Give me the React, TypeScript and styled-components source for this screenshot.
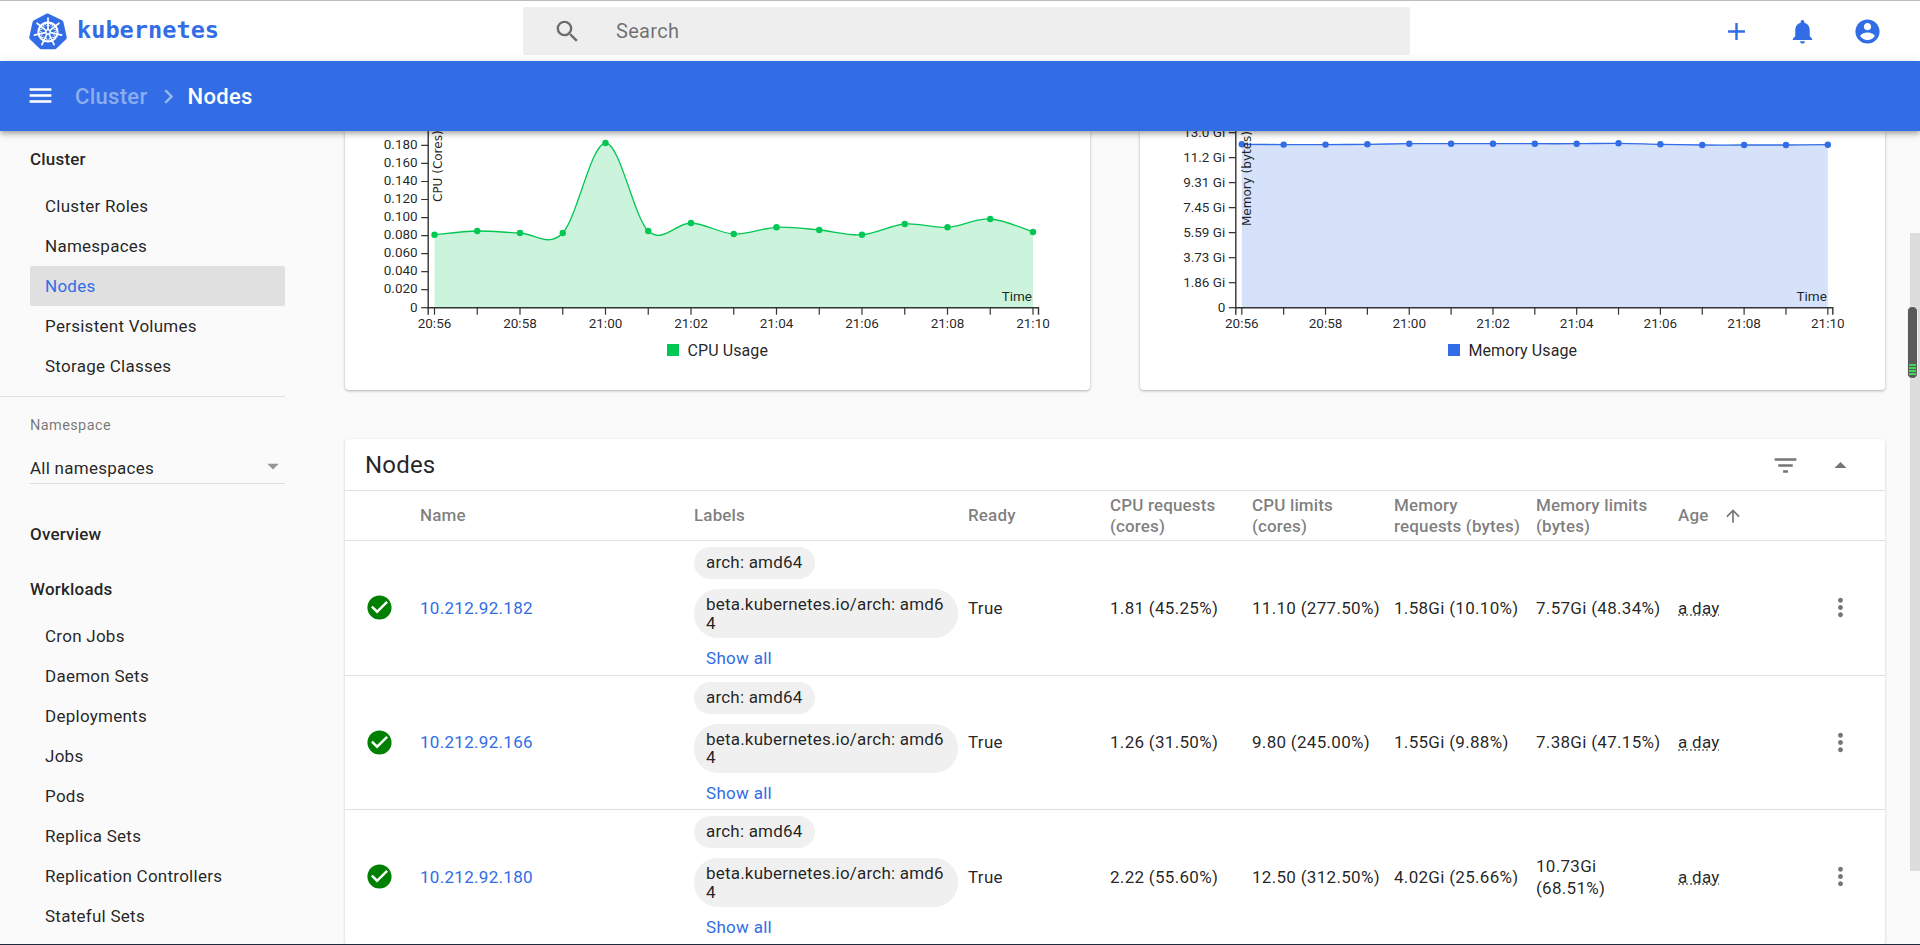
import React from "react";
import styled, { createGlobalStyle } from "styled-components";

const GlobalStyle = createGlobalStyle`
  html, body { margin: 0; padding: 0; height: 100%; overflow: hidden; background: #fafafa; }
  body { font-family: Roboto, "Liberation Sans", sans-serif; color: rgba(0,0,0,.87); }
  #root { height: 100%; }
  * { box-sizing: border-box; }
`;

const BLUE = "#326de6";
const GREEN = "#00c853";

const Page = styled.div`
  width: 1920px; height: 945px; display: flex; flex-direction: column; overflow: hidden;
  border-top: 1px solid #bdbdbd; border-bottom: 1px solid #1f2a3a; background: #fafafa;
`;
const TopBar = styled.header`
  flex: 0 0 60px; display: flex; align-items: center; background: #fff;
`;
const Brand = styled.div`
  width: 523px; padding-left: 29px; display: flex; align-items: center; gap: 10px;
`;
const BrandName = styled.span`
  font-family: "DejaVu Sans Mono", monospace; font-weight: 700; font-size: 23.6px; color: ${BLUE};
  position: relative; top: -1px;
`;
const SearchBox = styled.div`
  width: 887px; height: 48px; background: #eee; border-radius: 2px; display: flex; align-items: center;
  padding-left: 30px; gap: 34px; color: rgba(0,0,0,.54); font-size: 20px; letter-spacing: .3px;
`;
const Actions = styled.div`
  flex: 1; display: flex; justify-content: flex-end; padding-right: 38px; gap: 36.5px; color: ${BLUE};
`;
const Icon = styled.svg<{ $size?: number; $color?: string }>`
  width: ${(p) => p.$size ?? 29}px; height: ${(p) => p.$size ?? 29}px; flex: none; display: block;
  fill: ${(p) => p.$color ?? "currentColor"};
`;
const BlueBar = styled.div`
  flex: 0 0 70px; background: ${BLUE}; color: #fff; display: flex; align-items: center; padding-left: 26px;
  box-shadow: 0 2px 4px -1px rgba(0,0,0,.2), 0 4px 5px 0 rgba(0,0,0,.14), 0 1px 10px 0 rgba(0,0,0,.12);
  position: relative; z-index: 2; font-size: 22px; font-weight: 500;
`;
const Crumb = styled.span<{ $dim?: boolean }>`
  color: ${(p) => (p.$dim ? "rgba(255,255,255,.45)" : "#fff")}; letter-spacing: .3px;
`;
const CrumbSep = styled.span`
  color: rgba(255,255,255,.5); display: flex; margin: 0 5px 0 6px;
`;
const MenuButton = styled.span`
  display: flex; margin-right: 20px; margin-top: -1px;
`;
const Body = styled.div`
  flex: 1; min-height: 0; display: flex; overflow: hidden;
`;
const Sidebar = styled.nav`
  flex: 0 0 300px; padding-top: 8px; overflow: hidden; background: #fafafa;
`;
const SideInner = styled.div`
  width: 285px;
`;
const SideHeading = styled.div<{ $top?: number; $gap?: number }>`
  height: 40px; margin: ${(p) => p.$top ?? 0}px 0 ${(p) => p.$gap ?? 0}px 30px; display: flex; align-items: center;
  font-size: 17px; font-weight: 500; letter-spacing: .2px; color: rgba(0,0,0,.87);
`;
const SideItem = styled.div<{ $active?: boolean }>`
  height: 40px; margin-left: 30px; padding-left: 15px; display: flex; align-items: center; border-radius: 2px;
  font-size: 17px; letter-spacing: .26px; color: ${(p) => (p.$active ? BLUE : "rgba(0,0,0,.87)")};
  background: ${(p) => (p.$active ? "#e0e0e0" : "transparent")};
`;
const SideDivider = styled.div`
  height: 1px; background: #e0e0e0; margin-top: 10px;
`;
const NamespaceLabel = styled.div`
  margin: 20px 0 0 30px; height: 18px; line-height: 18px; font-size: 14.5px; letter-spacing: .4px; color: rgba(0,0,0,.54);
`;
const NamespaceSelect = styled.div`
  margin: 18px 0 0 30px; height: 31px; border-bottom: 1px solid #ddd; display: flex; align-items: center;
  justify-content: space-between; font-size: 17px; letter-spacing: .26px; color: rgba(0,0,0,.87);
`;
const SelectCaret = styled.span`
  display: flex; color: rgba(0,0,0,.4); margin: -4px -2px 0 0;
`;
const Main = styled.main`
  flex: 1; min-width: 0; padding-left: 45px; overflow: hidden;
`;
const ChartRow = styled.div`
  display: flex; gap: 50px; width: 1540px;
`;
const ChartCard = styled.section`
  width: 745px; height: 259px; background: #fff; border-radius: 0 0 4px 4px; overflow: hidden; display: flex; flex-direction: column;
  box-shadow: 0 1px 3px rgba(0,0,0,.3);
`;
const ChartSvg = styled.svg`
  display: block; flex: none; width: 745px; height: 202px; font-family: Roboto, sans-serif; font-size: 13.5px; fill: rgba(0,0,0,.87);
`;
const Legend = styled.div`
  display: flex; align-items: center; justify-content: center; gap: 8.5px; height: 24px; margin-top: 5px;
  font-size: 16px; letter-spacing: .1px; color: rgba(0,0,0,.87);
`;
const LegendSwatch = styled.span<{ $color: string }>`
  width: 12px; height: 12px; background: ${(p) => p.$color}; flex: none;
`;
const TableCard = styled.section`
  margin-top: 49px; width: 1540px; background: #fff; border-radius: 4px;
  box-shadow: 0 1px 3px rgba(0,0,0,.2);
`;
const TableTitleBar = styled.div`
  height: 52px; border-bottom: 1px solid #e0e0e0; display: flex; align-items: center; padding: 1px 0 0 20px;
  font-size: 24px; letter-spacing: .2px; color: rgba(0,0,0,.87);
`;
const TitleText = styled.span`
  flex: 1;
`;
const TitleIcons = styled.span`
  display: flex; gap: 26px; padding-right: 30.5px; color: rgba(0,0,0,.54);
`;
const COLUMNS = "75px 274px 274px 142px 142px 142px 142px 142px 1fr 90px";
const HeadRow = styled.div`
  height: 50px; display: grid; grid-template-columns: ${COLUMNS}; align-items: center; border-bottom: 1px solid #e0e0e0;
  font-size: 17px; font-weight: 500; line-height: 21px; color: rgba(0,0,0,.52); letter-spacing: .15px;
`;
const DataRow = styled.div`
  height: 134.5px; display: grid; grid-template-columns: ${COLUMNS}; align-items: center; border-bottom: 1px solid #e0e0e0;
  font-size: 17px; line-height: 22px; color: rgba(0,0,0,.87); letter-spacing: .3px;
`;
const HeadCell = styled.div`
  white-space: nowrap;
`;
const SortCell = styled.div`
  display: flex; align-items: center; gap: 15px;
`;
const StatusCell = styled.div`
  display: flex; justify-content: center; padding-right: 7px; color: #008000;
`;
const NameLink = styled.a`
  color: ${BLUE};
`;
const Labels = styled.div`
  display: flex; flex-direction: column; align-items: flex-start; gap: 10px;
`;
const Chip = styled.span`
  display: inline-block; width: fit-content; max-width: 264px; padding: 6px 12px; border-radius: 24px; background: #f0f0f0; color: rgba(0,0,0,.87);
  font-size: 17px; line-height: 18.5px; word-break: break-all; letter-spacing: .2px; min-height: 32px;
`;
const ShowAll = styled.a`
  color: ${BLUE}; margin-left: 12px; line-height: 20px;
`;
const MemoryLimit = styled.div`
  padding-right: 12px;
`;
const AgeText = styled.span`
  text-decoration: underline dotted rgba(0,0,0,.6);
`;
const MenuCell = styled.div`
  display: flex; justify-content: center; color: rgba(0,0,0,.54);
`;
const Track = styled.div`
  flex: 0 0 10px; height: 638px; margin-top: 102px; background: #dcdcdc;
`;
const Thumb = styled.div`
  width: 11px; height: 73px; margin: 73px 0 0 -3px; border-radius: 5px; background: #5a5a5a; border: 1px solid #efefef;
  display: flex; flex-direction: column; justify-content: flex-end; align-items: center; gap: 1px; padding-bottom: 3px;
`;
const ThumbStripe = styled.i`
  display: block; width: 7px; height: 2px; background: #3fd65a;
`;

const P = {
  search: "M15.5 14h-.79l-.28-.27A6.471 6.471 0 0 0 16 9.5 6.5 6.5 0 1 0 9.5 16c1.61 0 3.09-.59 4.23-1.57l.27.28v.79l5 4.99L20.49 19l-4.99-5zm-6 0C7.01 14 5 11.99 5 9.5S7.01 5 9.5 5 14 7.01 14 9.5 11.99 14 9.5 14z",
  add: "M19 13h-6v6h-2v-6H5v-2h6V5h2v6h6v2z",
  bell: "M12 22c1.1 0 2-.9 2-2h-4c0 1.1.89 2 2 2zm6-6v-5c0-3.07-1.64-5.64-4.5-6.32V4c0-.83-.67-1.5-1.5-1.5s-1.5.67-1.5 1.5v.68C7.63 5.36 6 7.92 6 11v5l-2 2v1h16v-1l-2-2z",
  account: "M12 2C6.48 2 2 6.48 2 12s4.48 10 10 10 10-4.48 10-10S17.52 2 12 2zm0 3c1.66 0 3 1.34 3 3s-1.34 3-3 3-3-1.34-3-3 1.34-3 3-3zm0 14.2c-2.5 0-4.71-1.28-6-3.22.03-1.99 4-3.08 6-3.08 1.99 0 5.97 1.09 6 3.08-1.29 1.94-3.5 3.22-6 3.22z",
  menu: "M3 18h18v-2H3v2zm0-5h18v-2H3v2zm0-7v2h18V6H3z",
  chevron: "M10 6L8.59 7.41 13.17 12l-4.58 4.59L10 18l6-6z",
  filter: "M10 18h4v-2h-4v2zM3 6v2h18V6H3zm3 7h12v-2H6v2z",
  dropUp: "M7 14l5-5 5 5z",
  dropDown: "M7 10l5 5 5-5z",
  up: "M4 12l1.41 1.41L11 7.83V20h2V7.83l5.58 5.59L20 12l-8-8-8 8z",
  more: "M12 8c1.1 0 2-.9 2-2s-.9-2-2-2-2 .9-2 2 .9 2 2 2zm0 2c-1.1 0-2 .9-2 2s.9 2 2 2 2-.9 2-2-.9-2-2-2zm0 6c-1.1 0-2 .9-2 2s.9 2 2 2 2-.9 2-2-.9-2-2-2z",
  check: "M12 2C6.48 2 2 6.48 2 12s4.48 10 10 10 10-4.48 10-10S17.52 2 12 2zm-2 15l-5-5 1.41-1.41L10 14.17l7.59-7.59L19 8l-9 9z",
};

const MI = ({ d, size, color }: { d: string; size?: number; color?: string }) => (
  <Icon viewBox="0 0 24 24" $size={size} $color={color}>
    <path d={d} />
  </Icon>
);

const LogoSvg = styled.svg`
  flex: none;
`;

const Logo = () => {
  const spokes = Array.from({ length: 7 }, (_, i) => (i * 360) / 7);
  return (
    <LogoSvg width="38" height="37" viewBox="0 0 38 37">
      <path
        d="M19 .6 33 7.3c.7.3 1.2 1 1.4 1.7l3.3 14.9c.2.8 0 1.5-.4 2.1L27.7 35.2c-.5.6-1.2 1-2 1H12.3c-.8 0-1.5-.4-2-1L.7 26c-.4-.6-.6-1.3-.4-2.1L3.6 9c.2-.7.7-1.4 1.4-1.7L17.9.6c.3-.1.8-.1 1.1 0z"
        fill={BLUE}
      />
      <g stroke="#fff" fill="none" transform="translate(19 19)">
        <circle r="9.6" strokeWidth="2" />
        <circle r="2.2" strokeWidth="1.6" />
        {spokes.map((a) => (
          <g key={a} transform={`rotate(${a})`}>
            <line y1="-3" y2="-14" strokeWidth="1.7" strokeLinecap="round" />
            <line x1="1.2" y1="-6" x2="4" y2="-9" strokeWidth=".8" />
            <line x1="-1.2" y1="-6" x2="-4" y2="-9" strokeWidth=".8" />
          </g>
        ))}
      </g>
    </LogoSvg>
  );
};

// All chart coordinates are local to the card: card x = page x - cardLeft, y = page y - 131.
type ChartDef = {
  axisX: number; x0: number; dx: number; endX: number; base: number;
  ys: number[]; yticks: { label: string; y: number }[];
  color: string; yLabel: string; yLabelX: number; yLabelEnd: number; yLabelSize: number;
};

const catmull = (pts: [number, number][]) => {
  let d = `M${pts[0][0]},${pts[0][1]}`;
  for (let i = 0; i < pts.length - 1; i++) {
    const p0 = pts[i - 1] ?? pts[i];
    const p1 = pts[i];
    const p2 = pts[i + 1];
    const p3 = pts[i + 2] ?? p2;
    const c1 = [p1[0] + (p2[0] - p0[0]) / 6, p1[1] + (p2[1] - p0[1]) / 6];
    const c2 = [p2[0] - (p3[0] - p1[0]) / 6, p2[1] - (p3[1] - p1[1]) / 6];
    d += `C${c1[0].toFixed(2)},${c1[1].toFixed(2)} ${c2[0].toFixed(2)},${c2[1].toFixed(2)} ${p2[0].toFixed(2)},${p2[1].toFixed(2)}`;
  }
  return d;
};

const XLABELS = ["20:56", "20:58", "21:00", "21:02", "21:04", "21:06", "21:08", "21:10"];
const AXIS = "#333";

const Chart = ({ c }: { c: ChartDef }) => {
  const pts = c.ys.map((y, i) => [c.x0 + c.dx * i, y] as [number, number]);
  const line = catmull(pts);
  const area = `${line}L${pts[pts.length - 1][0]},${c.base}L${pts[0][0]},${c.base}Z`;
  return (
    <ChartSvg viewBox="0 0 745 202">
      <path d={area} fill={c.color} fillOpacity=".2" />
      <path d={line} fill="none" stroke={c.color} strokeWidth="1.3" />
      {pts.map(([x, y]) => (
        <circle key={x} cx={x} cy={y} r="3.2" fill={c.color} />
      ))}
      <path d={`M${c.axisX},-5V${c.base}H${c.endX}v7`} fill="none" stroke={AXIS} strokeWidth="1.4" />
      <path d={`M${c.axisX},${c.base}v7`} fill="none" stroke={AXIS} strokeWidth="1.4" />
      {c.yticks.map((t) => (
        <g key={t.label}>
          <line x1={c.axisX - 7} x2={c.axisX} y1={t.y} y2={t.y} stroke={AXIS} strokeWidth="1.2" />
          <text x={c.axisX - 10.5} y={t.y + 3.8} textAnchor="end">{t.label}</text>
        </g>
      ))}
      {pts.map(([x], i) => (
        <g key={x}>
          <line x1={x} x2={x} y1={c.base} y2={c.base + 7} stroke={AXIS} strokeWidth="1.2" />
          {i % 2 === 0 && (
            <text x={x} y={c.base + 20} textAnchor="middle">{XLABELS[i / 2]}</text>
          )}
        </g>
      ))}
      <text x={pts[pts.length - 1][0] - 1} y={c.base - 6.5} textAnchor="end">Time</text>
      <text
        transform={`translate(${c.yLabelX} ${c.yLabelEnd}) rotate(-90)`}
        fontFamily='"DejaVu Sans", sans-serif'
        fontSize={c.yLabelSize}
      >
        {c.yLabel}
      </text>
    </ChartSvg>
  );
};

const at = (y: number) => y - 131;

const cpuChart: ChartDef = {
  axisX: 83.2, x0: 89.5, dx: 42.75, endX: 693.5, base: at(307.7),
  ys: [234.7, 231, 233, 233, 143, 231, 223, 234, 227.3, 230, 234.7, 224, 227.3, 219, 232].map(at),
  yticks: ["0", "0.020", "0.040", "0.060", "0.080", "0.100", "0.120", "0.140", "0.160", "0.180", "0.200"].map((label, i) => ({
    label, y: at(307.7 - 18.03 * i),
  })),
  color: GREEN, yLabel: "CPU (Cores)", yLabelX: 97, yLabelEnd: at(202), yLabelSize: 12,
};

const memChart: ChartDef = {
  axisX: 95.8, x0: 101.8, dx: 41.86, endX: 692.8, base: at(307.7),
  ys: [144.3, 144.6, 144.6, 144.3, 143.7, 143.7, 143.7, 143.7, 143.7, 143.3, 144.3, 145, 145, 145, 144.7].map(at),
  yticks: ["0", "1.86 Gi", "3.73 Gi", "5.59 Gi", "7.45 Gi", "9.31 Gi", "11.2 Gi", "13.0 Gi"].map((label, i) => ({
    label, y: at(307.7 - 25 * i),
  })),
  color: BLUE, yLabel: "Memory (bytes)", yLabelX: 111, yLabelEnd: at(226), yLabelSize: 12,
};

const rows = [
  { name: "10.212.92.182", cr: "1.81 (45.25%)", cl: "11.10 (277.50%)", mr: "1.58Gi (10.10%)", ml: "7.57Gi (48.34%)" },
  { name: "10.212.92.166", cr: "1.26 (31.50%)", cl: "9.80 (245.00%)", mr: "1.55Gi (9.88%)", ml: "7.38Gi (47.15%)" },
  { name: "10.212.92.180", cr: "2.22 (55.60%)", cl: "12.50 (312.50%)", mr: "4.02Gi (25.66%)", ml: "10.73Gi (68.51%)" },
];

const clusterItems = ["Cluster Roles", "Namespaces", "Nodes", "Persistent Volumes", "Storage Classes"];
const workloadItems = ["Cron Jobs", "Daemon Sets", "Deployments", "Jobs", "Pods", "Replica Sets", "Replication Controllers", "Stateful Sets"];

export default function App() {
  return (
    <>
      <GlobalStyle />
      <Page>
        <TopBar>
          <Brand>
            <Logo />
            <BrandName>kubernetes</BrandName>
          </Brand>
          <SearchBox>
            <MI d={P.search} />
            <span>Search</span>
          </SearchBox>
          <Actions>
            <MI d={P.add} />
            <MI d={P.bell} />
            <MI d={P.account} />
          </Actions>
        </TopBar>
        <BlueBar>
          <MenuButton><MI d={P.menu} /></MenuButton>
          <Crumb $dim>Cluster</Crumb>
          <CrumbSep><MI d={P.chevron} /></CrumbSep>
          <Crumb>Nodes</Crumb>
        </BlueBar>
        <Body>
          <Sidebar>
            <SideInner>
              <SideHeading $gap={7}>Cluster</SideHeading>
              {clusterItems.map((t) => (
                <SideItem key={t} $active={t === "Nodes"}>{t}</SideItem>
              ))}
              <SideDivider />
              <NamespaceLabel>Namespace</NamespaceLabel>
              <NamespaceSelect>
                <span>All namespaces</span>
                <SelectCaret><MI d={P.dropDown} size={28} /></SelectCaret>
              </NamespaceSelect>
              <SideHeading $top={30}>Overview</SideHeading>
              <SideHeading $top={15} $gap={7}>Workloads</SideHeading>
              {workloadItems.map((t) => (
                <SideItem key={t}>{t}</SideItem>
              ))}
            </SideInner>
          </Sidebar>
          <Main>
            <ChartRow>
              <ChartCard>
                <Chart c={cpuChart} />
                <Legend><LegendSwatch $color={GREEN} /><span>CPU Usage</span></Legend>
              </ChartCard>
              <ChartCard>
                <Chart c={memChart} />
                <Legend><LegendSwatch $color={BLUE} /><span>Memory Usage</span></Legend>
              </ChartCard>
            </ChartRow>
            <TableCard>
              <TableTitleBar>
                <TitleText>Nodes</TitleText>
                <TitleIcons>
                  <MI d={P.filter} />
                  <MI d={P.dropUp} />
                </TitleIcons>
              </TableTitleBar>
              <HeadRow>
                <span />
                <HeadCell>Name</HeadCell>
                <HeadCell>Labels</HeadCell>
                <HeadCell>Ready</HeadCell>
                <HeadCell>CPU requests<br />(cores)</HeadCell>
                <HeadCell>CPU limits<br />(cores)</HeadCell>
                <HeadCell>Memory<br />requests (bytes)</HeadCell>
                <HeadCell>Memory limits<br />(bytes)</HeadCell>
                <SortCell>Age <MI d={P.up} size={20} color="rgba(0,0,0,.54)" /></SortCell>
                <span />
              </HeadRow>
              {rows.map((r) => (
                <DataRow key={r.name}>
                  <StatusCell><MI d={P.check} /></StatusCell>
                  <NameLink>{r.name}</NameLink>
                  <Labels>
                    <Chip>arch: amd64</Chip>
                    <Chip>beta.kubernetes.io/arch: amd64</Chip>
                    <ShowAll>Show all</ShowAll>
                  </Labels>
                  <div>True</div>
                  <div>{r.cr}</div>
                  <div>{r.cl}</div>
                  <div>{r.mr}</div>
                  <MemoryLimit>{r.ml}</MemoryLimit>
                  <div><AgeText>a day</AgeText></div>
                  <MenuCell><MI d={P.more} /></MenuCell>
                </DataRow>
              ))}
            </TableCard>
          </Main>
          <Track>
            <Thumb>
              <ThumbStripe /><ThumbStripe /><ThumbStripe /><ThumbStripe />
            </Thumb>
          </Track>
        </Body>
      </Page>
    </>
  );
}
